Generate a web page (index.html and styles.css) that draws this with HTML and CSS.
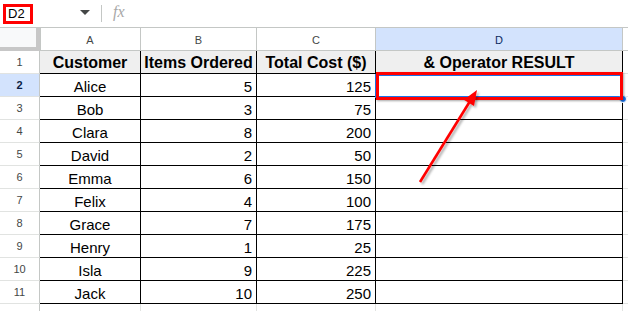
FILE: index.html
```html
<!DOCTYPE html>
<html>
<head>
<meta charset="utf-8">
<link rel="stylesheet" href="styles.css">
</head>
<body>
<div class="page">
  <div class="toolbar">
    <div class="namebox">D2</div>
    <svg class="caret" width="10" height="6" viewBox="0 0 10 6"><path d="M0 0 L10 0 L5 5 Z" fill="#444746"/></svg>
    <div class="sep"></div>
    <span class="fx">fx</span>
  </div>
  <div class="sheet">
    <div class="corner"></div>
    <div class="ch">A</div>
    <div class="ch">B</div>
    <div class="ch">C</div>
    <div class="ch ch-sel">D</div>
    <div class="ch ch-e"></div>

    <div class="rh">1</div>
    <div class="cell th">Customer</div>
    <div class="cell th">Items Ordered</div>
    <div class="cell th">Total Cost ($)</div>
    <div class="cell th">&amp; Operator RESULT</div>
    <div class="ge"></div>

    <div class="rh rh-sel">2</div>
    <div class="cell c">Alice</div><div class="cell r">5</div><div class="cell r">125</div><div class="cell"></div><div class="ge"></div>
    <div class="rh">3</div>
    <div class="cell c">Bob</div><div class="cell r">3</div><div class="cell r">75</div><div class="cell"></div><div class="ge"></div>
    <div class="rh">4</div>
    <div class="cell c">Clara</div><div class="cell r">8</div><div class="cell r">200</div><div class="cell"></div><div class="ge"></div>
    <div class="rh">5</div>
    <div class="cell c">David</div><div class="cell r">2</div><div class="cell r">50</div><div class="cell"></div><div class="ge"></div>
    <div class="rh">6</div>
    <div class="cell c">Emma</div><div class="cell r">6</div><div class="cell r">150</div><div class="cell"></div><div class="ge"></div>
    <div class="rh">7</div>
    <div class="cell c">Felix</div><div class="cell r">4</div><div class="cell r">100</div><div class="cell"></div><div class="ge"></div>
    <div class="rh">8</div>
    <div class="cell c">Grace</div><div class="cell r">7</div><div class="cell r">175</div><div class="cell"></div><div class="ge"></div>
    <div class="rh">9</div>
    <div class="cell c">Henry</div><div class="cell r">1</div><div class="cell r">25</div><div class="cell"></div><div class="ge"></div>
    <div class="rh">10</div>
    <div class="cell c">Isla</div><div class="cell r">9</div><div class="cell r">225</div><div class="cell"></div><div class="ge"></div>
    <div class="rh">11</div>
    <div class="cell c">Jack</div><div class="cell r">10</div><div class="cell r">250</div><div class="cell"></div><div class="ge"></div>
    <div class="rh"></div>
    <div class="ge"></div><div class="ge"></div><div class="ge"></div><div class="ge"></div><div class="ge"></div>
  </div>

  <div class="selection"></div>
  <div class="handle"></div>
  <div class="highlight"></div>
  <svg class="arrow" width="628" height="311" viewBox="0 0 628 311">
    <defs>
      <filter id="sh" x="-20%" y="-20%" width="140%" height="140%">
        <feDropShadow dx="2" dy="2" stdDeviation="1.2" flood-color="#000" flood-opacity="0.3"/>
      </filter>
    </defs>
    <g filter="url(#sh)">
      <line x1="420" y1="182" x2="469.5" y2="102" stroke="#ff0000" stroke-width="2.6"/>
      <polygon points="477,90 474,106 463.8,99.7" fill="#ff0000"/>
    </g>
  </svg>
</div>
</body>
</html>
```
FILE: styles.css
```css
html, body {
  margin: 0;
  padding: 0;
  background: #ffffff;
  overflow: hidden;
}

.page {
  position: relative;
  width: 628px;
  height: 311px;
  overflow: hidden;
  font-family: "Liberation Sans", Arial, sans-serif;
  color: #000000;
}

.toolbar {
  height: 27px;
  border-bottom: 1px solid #c4c7c5;
  display: flex;
  align-items: center;
  box-sizing: content-box;
}

.namebox {
  margin-left: 3px;
  width: 22px;
  height: 14px;
  border: 3px solid #ff0000;
  font-size: 13px;
  line-height: 14px;
  padding-left: 2px;
  color: #000;
  background: #fff;
}

.caret {
  margin-left: 47px;
  margin-top: -2px;
}

.sep {
  width: 1px;
  height: 17px;
  background: #c4c7c5;
  margin-left: 11px;
  margin-top: -1px;
}

.fx {
  margin-left: 11px;
  margin-top: -3px;
  font-family: "Liberation Serif", "Times New Roman", serif;
  font-style: italic;
  font-size: 16px;
  color: #a8a8a8;
}

.sheet {
  display: grid;
  grid-template-columns: 40px 101px 116px 119px 247px 6px;
  grid-auto-rows: 23px;
}

.sheet > div {
  box-sizing: border-box;
}

.corner {
  background: #f8f9fa;
  border-right: 4px solid #c7c7c7;
  border-bottom: 4px solid #c7c7c7;
  box-shadow: 1px 0 0 #c4c7c5;
}

.ch {
  border-right: 1px solid #c4c7c5;
  border-bottom: 1px solid #c4c7c5;
  display: flex;
  align-items: center;
  justify-content: center;
  font-size: 11px;
  color: #444746;
  padding-top: 1px;
}

.ch-sel {
  background: #d3e3fd;
  color: #0b2a5e;
}

.ch-e {
  border-right: none;
}

.rh {
  border-right: 1px solid #c4c7c5;
  border-bottom: 1px solid #e1e3e1;
  display: flex;
  align-items: center;
  justify-content: center;
  font-size: 11px;
  color: #444746;
}

.rh-sel {
  background: #d3e3fd;
  color: #0b1f44;
  font-weight: bold;
}

.cell {
  border-right: 1px solid #000;
  border-bottom: 1px solid #000;
  display: flex;
  align-items: flex-end;
  padding: 0 4px 1px 4px;
  font-size: 15px;
  white-space: nowrap;
  overflow: hidden;
}

.th {
  background: #efefef;
  font-weight: bold;
  font-size: 16px;
  justify-content: center;
}

.c {
  justify-content: center;
}

.r {
  justify-content: flex-end;
}

.ge {
  border-bottom: 1px solid #e1e3e1;
  border-right: 1px solid #e1e3e1;
}

.selection {
  position: absolute;
  left: 375px;
  top: 74px;
  width: 248px;
  height: 24px;
  box-sizing: border-box;
  border: 2px solid #1a73e8;
}

.handle {
  position: absolute;
  left: 619px;
  top: 95px;
  width: 6px;
  height: 6px;
  border-radius: 50%;
  background: #1a73e8;
  border: 1px solid #ffffff;
}

.highlight {
  position: absolute;
  left: 376px;
  top: 72px;
  width: 247px;
  height: 28px;
  box-sizing: border-box;
  border: 3px solid #ff0000;
  box-shadow: 1px 1px 2px rgba(0, 0, 0, 0.35);
}

.arrow {
  position: absolute;
  left: 0;
  top: 0;
  pointer-events: none;
}
```
